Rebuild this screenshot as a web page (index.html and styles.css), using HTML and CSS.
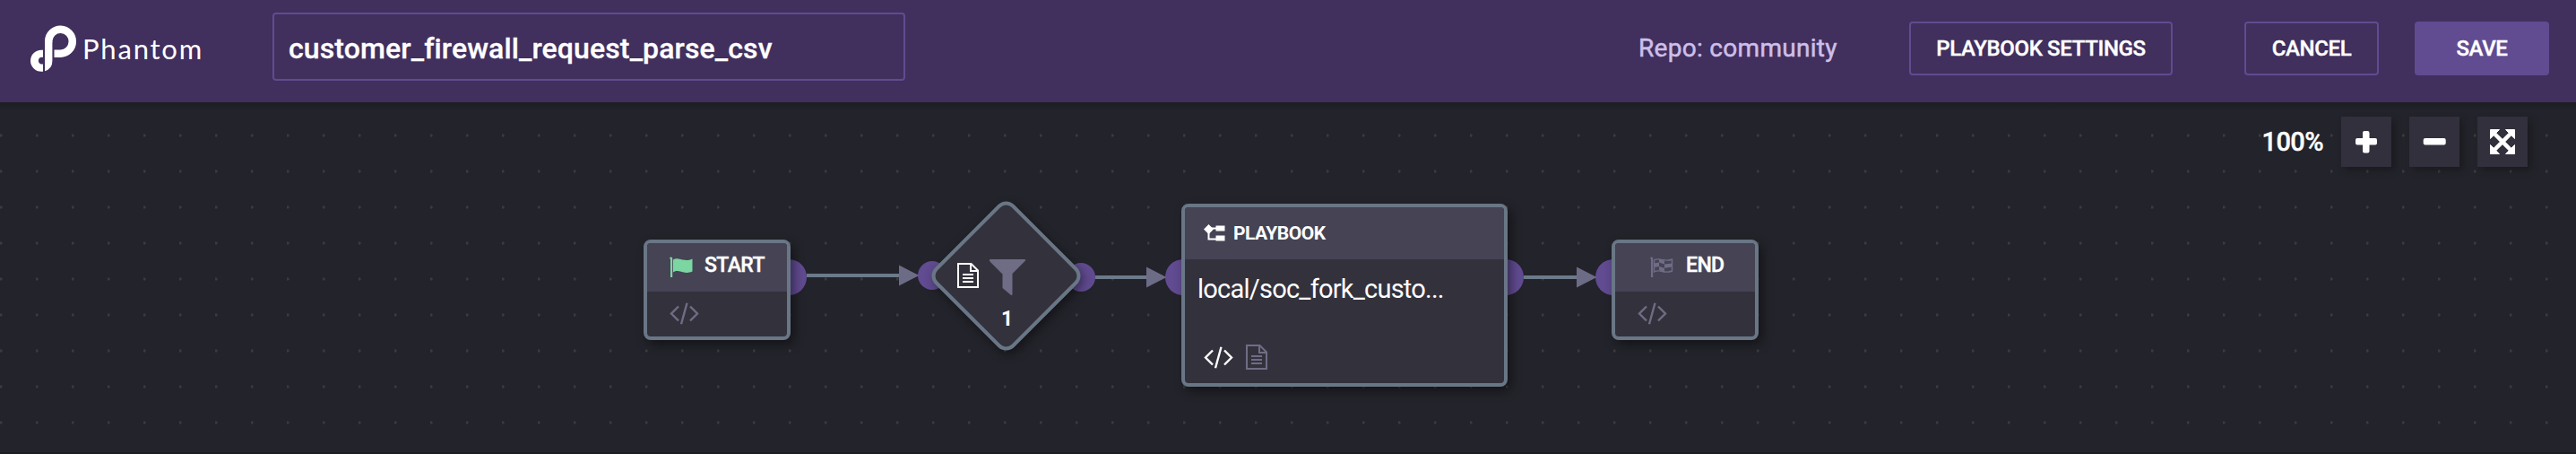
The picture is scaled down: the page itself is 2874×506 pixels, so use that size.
FILE: index.html
```html
<!DOCTYPE html>
<html lang="en">
<head>
<meta charset="utf-8">
<title>Phantom playbook editor</title>
<link rel="stylesheet" href="styles.css">
</head>
<body>
<svg class="defs" width="0" height="0">
  <symbol id="code" viewBox="0 0 33 25"><path d="M10 4.500L2 12.500L10 20.500M23 4.500L31 12.500L23 20.500M19.500 .8L13 24.200" fill="none" stroke="currentColor" stroke-width="2.400"/></symbol>
  <symbol id="doc" viewBox="0 0 24 28"><path d="M1 1H15.500L23 8.500V27H1ZM15 1V9H23M6 13H18M6 17H18M6 21H18" fill="none" stroke="currentColor" stroke-width="2"/></symbol>
</svg>
<header class="topbar">
  <div class="logo">
    <svg class="logo-mark" width="52" height="52" viewBox="0 0 52 52">
      <path d="M20.200 19V17.700A13.300 13.500 0 1 1 33.500 31.700H26.500" fill="none" stroke="#fff" stroke-width="8.500"/>
      <path d="M16 18V51.300Q24.400 48.500 24.400 40V18Z" fill="#fff"/>
      <path d="M14 27.700V35.700H12A4 4 0 0 0 12 43.500H14V51.700H12A12 12 0 0 1 12 27.700Z" fill="#fff"/>
    </svg>
    <span class="logo-text">Phantom</span>
  </div>
  <div class="name-field">customer_firewall_request_parse_csv</div>
  <div class="repo">Repo: community</div>
  <button class="btn settings">PLAYBOOK SETTINGS</button>
  <button class="btn cancel">CANCEL</button>
  <button class="btn save">SAVE</button>
</header>
<main class="canvas">
  <div class="zoom-bar">
    <span class="zoom-level">100%</span>
    <button class="tool"><svg width="26" height="26" viewBox="0 0 26 26"><path d="M3 9H9V3Q9 1 11 1H14.500Q16.500 1 16.500 3V9H23Q25 9 25 11V14.500Q25 16.500 23 16.500H16.500V23.500Q16.500 25.500 14.500 25.500H11Q9 25.500 9 23.500V16.500H3Q1 16.500 1 14.500V11Q1 9 3 9Z" fill="#fff"/></svg></button>
    <button class="tool"><svg width="26" height="26" viewBox="0 0 26 26"><rect x=".7" y="9" width="25" height="7.500" rx="2" fill="#fff"/></svg></button>
    <button class="tool"><svg width="28" height="28" viewBox="0 0 28 28"><path d="M5 5L23 23M23 5L5 23" stroke="#fff" stroke-width="4.500"/><path d="M.5.5H10.500L.5 10.500ZM17.500.5H27.500V10.500ZM.5 17.500V27.500H10.500ZM27.500 17.500V27.500H17.500Z" fill="#fff" stroke="#fff" stroke-linejoin="round"/></svg></button>
  </div>

  <svg class="wires" width="2874" height="404" viewBox="0 102 2874 404">
    <g fill="#614b91"><circle cx="880" cy="309" r="20"/><circle cx="1040" cy="307" r="16"/><circle cx="1206" cy="309" r="16"/><circle cx="1320" cy="309" r="20"/><circle cx="1680" cy="309" r="20"/><circle cx="1800" cy="309" r="20"/></g>
    <path d="M900 307H1004M1222 309H1280M1700 309H1760" stroke="#6c7a8a" stroke-width="4"/>
    <path d="M1003 295.500L1025.500 307L1003 318.500ZM1279 297.500L1301.500 309L1279 320.500ZM1759 297.500L1781.500 309L1759 320.500Z" fill="#6d6c87"/>
  </svg>

  <section class="node start">
    <div class="node-head">
      <svg width="26" height="24" viewBox="0 0 26 24"><path d="M0 1.500Q1.500-.7 3.200 1.500V23H1V3Z" fill="#7cd6a2"/><path d="M4 3.500C10-.5 16 7 25.500 2.500V16.500C16 21 11 13 4 17.500Z" fill="#7cd6a2"/></svg>
      <span>START</span>
    </div>
    <div class="node-foot"><svg width="33" height="25"><use href="#code"/></svg></div>
  </section>

  <section class="filter">
    <div class="diamond"></div>
    <div class="filter-body">
      <svg class="doc" width="24" height="28"><use href="#doc"/></svg>
      <svg class="funnel" width="42" height="42" viewBox="0 0 42 42"><path d="M2 1H40Q42 1 40.500 3L26.500 17V39.500Q26.500 42 24.500 40.500L15.500 33V17.500L1.500 3.500Q0 1 2 1Z" fill="#6f6d85"/></svg>
      <span class="count">1</span>
    </div>
  </section>

  <section class="node playbook">
    <div class="node-head">
      <svg width="24" height="20" viewBox="0 0 24 20"><path d="M5.500 5V16.500H15M5 4.500H15" fill="none" stroke="#fff" stroke-width="2"/><path d="M5.500 0L11 5.500L5.500 11L0 5.500ZM13.500 1.500H23.500V7.500H13.500ZM13.500 12.500H23.500V18.500H13.500Z" fill="#fff"/></svg>
      <span>PLAYBOOK</span>
    </div>
    <div class="node-title">local/soc_fork_custo...</div>
    <div class="node-foot"><svg class="on" width="33" height="25"><use href="#code"/></svg><svg width="24" height="28"><use href="#doc"/></svg></div>
  </section>

  <section class="node end">
    <div class="node-head">
      <svg width="26" height="24" viewBox="0 0 26 24"><path d="M0 1.500Q1.500-.7 3.200 1.500V23H1V3Z" fill="#6f6d85"/><path d="M4.500 4C10 0 16 7 24.500 3V16C16 20 11 13 4.500 17Z" fill="none" stroke="#6f6d85" stroke-width="1.400"/><path d="M10 2.500L16 4.500V8.500L10 6.500ZM4.500 7.500L10 6.500V11L4.500 12ZM16 8.500L24.500 7.500V11.500L16 12.800ZM10 11L16 12.800V17.500L10 15Z" fill="#6f6d85"/></svg>
      <span>END</span>
    </div>
    <div class="node-foot"><svg width="33" height="25"><use href="#code"/></svg></div>
  </section>
</main>
</body>
</html>
```
FILE: styles.css
```css
* { box-sizing: border-box; }
body { margin: 0; width: 2874px; height: 506px; overflow: hidden; display: flex; flex-direction: column; background: #23232b; color: #fff; font-family: Roboto, sans-serif; }
svg { display: block; flex: none; }
.defs { position: absolute; }
button { font: inherit; color: inherit; padding: 0; }
.topbar { height: 114px; flex: none; display: flex; align-items: center; padding: 0 30px 6px 34px; background: #412f5d; }
.topbar > * { flex: none; }
.logo { width: 270px; display: flex; align-items: center; }
.logo-text { margin-left: 6px; font: 31px/40px Lato, sans-serif; letter-spacing: 1.8px; }
.name-field { width: 706px; height: 76px; margin-top: -4px; padding-left: 16px; border: 2px solid #614b91; border-radius: 4px; font-size: 32px; font-weight: 500; line-height: 76px; letter-spacing: 0.12px; -webkit-text-stroke: 0.3px; }
.repo { margin-left: 818px; color: #cdbfe9; font-size: 28px; line-height: 36px; letter-spacing: 0.3px; -webkit-text-stroke: 0.5px; }
.btn { height: 60px; border: 2px solid #614b91; border-radius: 4px; background: transparent; font-size: 24px; font-weight: 500; letter-spacing: -0.35px; -webkit-text-stroke: 0.4px; }
.settings { width: 294px; margin-left: auto; }
.cancel { width: 150px; margin-left: 80px; }
.save { width: 150px; margin-left: 40px; background: #614b91; }
.canvas { position: relative; flex: 1; border-bottom: 2px solid #1c1c23; background: linear-gradient(rgba(0,0,0,.18), transparent 10px), radial-gradient(circle at 1px 17px, #3b3b3e 1px, transparent 2.2px) 0 20px / 40px 40px, #23232b; }
.zoom-bar { position: absolute; top: 16px; right: 54px; display: flex; gap: 20px; }
.zoom-level { line-height: 56px; font-size: 29px; font-weight: 500; letter-spacing: -0.6px; -webkit-text-stroke: 0.4px; }
.tool { width: 56px; height: 56px; display: grid; place-items: center; border: 0; background: #31303c; box-shadow: 4px 4px 8px rgba(0,0,0,.28); }
.wires { position: absolute; left: 0; top: -12px; }
.node { position: absolute; display: flex; flex-direction: column; border: 4px solid #697686; border-radius: 8px; overflow: hidden; background: #33323c; box-shadow: 4px 5px 12px rgba(0,0,0,.45); }
.node-head { display: flex; align-items: center; background: #454354; font-weight: 500; }
.start, .end { width: 164px; height: 112px; top: 153px; }
.start { left: 718px; }
.end { left: 1798px; }
.start .node-head, .end .node-head { height: 54px; padding-left: 25px; gap: 13px; font-size: 23px; letter-spacing: -0.6px; -webkit-text-stroke: 0.4px; }
.start .node-head span, .end .node-head span { margin-top: -5px; }
.end .node-head { padding-left: 39px; gap: 14px; }
.node-foot { display: flex; align-items: center; gap: 14px; color: #6f6d85; padding: 12px 0 0 25px; }
.on { color: #fff; }
.playbook { left: 1318px; top: 113px; width: 364px; height: 204px; }
.playbook .node-head { height: 58px; padding-left: 21px; gap: 9px; font-size: 21px; font-weight: 700; letter-spacing: -0.5px; }
.node-title { padding: 14px 0 0 14px; font-size: 29px; line-height: 38px; letter-spacing: -0.77px; }
.playbook .node-foot { padding: 43px 0 0 21px; }
.filter { position: absolute; left: 1040px; top: 110px; width: 165px; height: 166px; }
.diamond { position: absolute; left: 20px; top: 21px; width: 125px; height: 125px; border: 4px solid #697686; border-radius: 13px; background: #33323c; transform: rotate(45deg); box-shadow: 5px 1px 12px rgba(0,0,0,.45); }
.filter-body { position: relative; display: grid; grid-template-columns: 24px 42px; column-gap: 11px; padding: 64px 0 0 28px; align-items: center; }
.doc { margin-top: -4px; }
.count { grid-column: 1 / 3; margin-left: 49px; font-size: 23px; line-height: 28px; font-weight: 700; margin-top: 12px; }
```
